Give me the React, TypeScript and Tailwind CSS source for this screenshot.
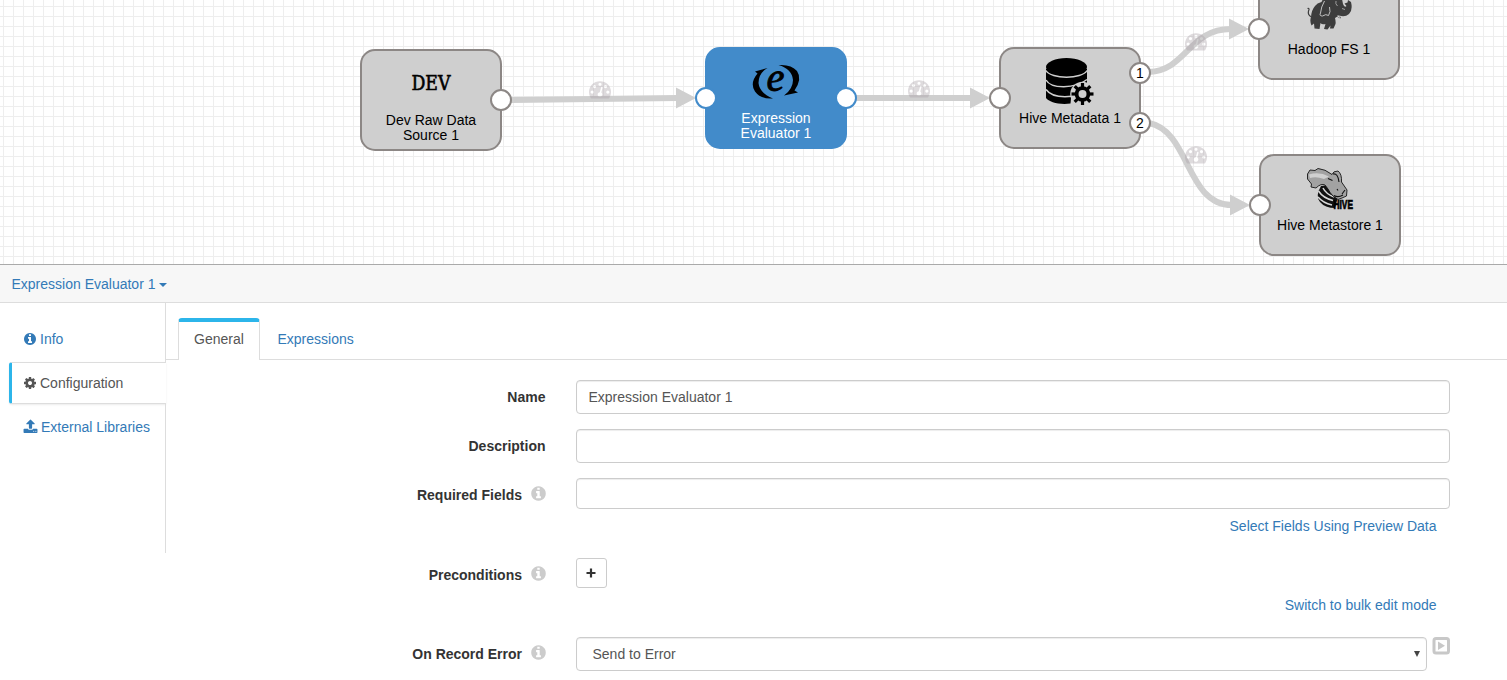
import type { ReactNode } from "react";

const INFO =
  "M1152 1376v-160q0-14-9-23t-23-9h-96v-512q0-14-9-23t-23-9h-320q-14 0-23 9t-9 23v160q0 14 9 23t23 9h96v320h-96q-14 0-23 9t-9 23v160q0 14 9 23t23 9h448q14 0 23-9t9-23zm-128-896v-160q0-14-9-23t-23-9h-192q-14 0-23 9t-9 23v160q0 14 9 23t23 9h192q14 0 23-9t9-23zm640 416q0 209-103 385.5t-279.5 279.5-385.5 103-385.5-103-279.5-279.5-103-385.5 103-385.5 279.5-279.5 385.5-103 385.5 103 279.5 279.5 103 385.5z";
const COG =
  "M1152 896q0-106-75-181t-181-75-181 75-75 181 75 181 181 75 181-75 75-181zm512-109v222q0 12-8 23t-20 13l-185 28q-19 54-39 91 35 50 107 138 10 12 10 25t-9 23q-27 37-99 108t-94 71q-12 0-26-9l-138-108q-44 23-91 38-16 136-29 186-7 28-36 28h-222q-14 0-24.5-8.5t-11.5-21.5l-28-184q-49-16-90-37l-141 107q-10 9-25 9-14 0-25-11-126-114-165-168-7-10-7-23 0-12 8-23 15-21 51-66.5t54-70.5q-27-50-41-99l-183-27q-13-2-21-12.5t-8-23.5v-222q0-12 8-23t19-13l186-28q14-46 39-92-40-57-107-138-10-12-10-24 0-10 9-23 26-36 98.5-107.5t94.5-71.5q13 0 26 10l138 107q44-23 91-38 16-136 29-186 7-28 36-28h222q14 0 24.5 8.5t11.5 21.5l28 184q49 16 90 37l142-107q9-9 24-9 13 0 25 10 129 119 165 170 7 8 7 22 0 12-8 23-15 21-51 66.5t-54 70.5q26 50 41 98l183 28q13 2 21 12.5t8 23.5z";
const UPLOAD =
  "M1344 1472q0-26-19-45t-45-19-45 19-19 45 19 45 45 19 45-19 19-45zm256 0q0-26-19-45t-45-19-45 19-19 45 19 45 45 19 45-19 19-45zm128-224v320q0 40-28 68t-68 28h-1472q-40 0-68-28t-28-68v-320q0-40 28-68t68-28h427q21 56 70.5 92t110.5 36h256q61 0 110.5-36t70.5-92h427q40 0 68 28t28 68zm-325-648q-17 40-59 40h-256v448q0 26-19 45t-45 19h-256q-26 0-45-19t-19-45v-448h-256q-42 0-59-40-17-39 14-69l448-448q18-19 45-19t45 19l448 448q31 30 14 69z";
const GAUGE =
  "M384 1152q0-53-37.5-90.5t-90.5-37.5-90.5 37.5-37.5 90.5 37.5 90.5 90.5 37.5 90.5-37.5 37.5-90.5zm192-448q0-53-37.5-90.5t-90.5-37.5-90.5 37.5-37.5 90.5 37.5 90.5 90.5 37.5 90.5-37.5 37.5-90.5zm428 481l101-382q6-26-7.5-48.5t-38.5-29.5-48 6.5-30 39.5l-101 382q-60 5-107 43.5t-63 98.5q-20 77 20 146t117 89 146-20 89-117q16-60-6-117t-72-91zm660-33q0-53-37.5-90.5t-90.5-37.5-90.5 37.5-37.5 90.5 37.5 90.5 90.5 37.5 90.5-37.5 37.5-90.5zm-640-640q0-53-37.5-90.5t-90.5-37.5-90.5 37.5-37.5 90.5 37.5 90.5 90.5 37.5 90.5-37.5 37.5-90.5zm448 192q0-53-37.5-90.5t-90.5-37.5-90.5 37.5-37.5 90.5 37.5 90.5 90.5 37.5 90.5-37.5 37.5-90.5zm320 448q0 261-141 483-19 29-54 29h-1402q-35 0-54-29-141-221-141-483 0-182 71-348t191-286 286-191 348-71 348 71 286 191 191 286 71 348z";

function Glyph({ d, className }: { d: string; className: string }) {
  return (
    <svg viewBox="0 0 1792 1792" fill="currentColor" className={className}>
      <path d={d} />
    </svg>
  );
}

function Port({ className, label }: { className: string; label?: string }) {
  return (
    <div
      className={`absolute flex h-[22px] w-[22px] items-center justify-center rounded-full border-2 bg-white text-[14px] leading-none text-black ${className}`}
    >
      {label}
    </div>
  );
}

function Node({ className, children }: { className: string; children: ReactNode }) {
  return (
    <div
      className={`absolute h-[102px] w-[142px] rounded-[15px] border-2 text-center text-[14px] leading-[15px] ${className}`}
    >
      {children}
    </div>
  );
}

function DevIcon() {
  return (
    <svg width="50" height="24" viewBox="0 0 50 24" className="mx-auto overflow-visible">
      <text x="5.500" y="19" fontFamily="DejaVu Serif, serif" fontSize="19.500" stroke="#000" strokeWidth="0.600" textLength="39" lengthAdjust="spacingAndGlyphs">
        DEV
      </text>
    </svg>
  );
}

function EvaluatorIcon() {
  return (
    <svg width="50" height="36" viewBox="0 0 50 36" className="mx-auto mt-[15px] overflow-visible">
      <path d="M4 7.500 L16.500 4 Q7.500 9 7.500 19 Q8.500 29 22 34.500 Q10 35.500 4 27.500 Q-1.500 19 6.500 9.500 Z" />
      <path d="M27.500 1 Q40 0 46 7 Q51.500 15 43.500 26.500 L47 28.600 L33 31.500 Q42 25 42 16 Q41 5 27.500 1 Z" />
      <text x="15.500" y="27.200" fontFamily="Liberation Serif, serif" fontStyle="italic" fontSize="43" stroke="#000" strokeWidth="0.900" textLength="18" lengthAdjust="spacingAndGlyphs">
        e
      </text>
    </svg>
  );
}

function DatabaseIcon() {
  return (
    <svg width="50" height="50" viewBox="0 0 50 50" className="mx-auto mt-[8px]">
      <path d="M1 12 V41 C4 45 14 48 25.500 46.500 L27 32 L42 26 V12 Z" />
      <ellipse cx="21.500" cy="10" rx="20.500" ry="9" />
      <path d="M1 13.500 C6 22.500 37 22.500 42 13.500 M1 23 C6 32 30 32 42 22.500 M1 32.500 C6 39.500 16 40.500 27 39.300" fill="none" stroke="#cfcfcf" strokeWidth="1.500" />
      <g transform="translate(37.500 37)">
        <circle r="12.300" fill="#cfcfcf" />
        {[0, 45, 90, 135].map((a) => (
          <rect key={a} x="-1.600" y="-11" width="3.200" height="22" transform={`rotate(${a})`} />
        ))}
        <circle r="7.800" />
        <circle r="4" fill="#cfcfcf" />
      </g>
    </svg>
  );
}

function ElephantIcon() {
  return (
    <svg width="48" height="34" viewBox="0 0 48 34" className="mx-auto">
      <path
        d="M10 6 Q12 3 16.500 2 L18 -1 H37 L38 4 Q39.500 8 41.500 6 L39.500 3.500 L42.500 2.500 L43 0 L46 2 Q48 10 44 14 Q40 17.500 34 15.500 L30 18 Q31 22 30.500 24 L28.500 28.500 L25 28.500 L25.500 25.500 L22.500 29.500 L19 29 L20.500 24 Q17 25 15.500 23 L14.500 29 L9.500 28.500 L9 23.500 L6.500 25.500 Q4.500 21 6 17 Q6.500 10 10 6 Z"
        fill="#3d3d3d"
      />
      <path d="M6.500 17 Q2.500 15 3.500 11 Q5 8 2.500 8.500" fill="none" stroke="#3d3d3d" strokeWidth="1.200" />
      <path d="M19.500 1 Q16 7 15.500 13 Q14 16 17.500 16 Q21 13.500 23.500 15.500 Q26 12 24.500 7" fill="none" stroke="#cfcfcf" strokeWidth="0.900" />
      <path d="M31 1 Q30 4 32.500 6 M37 8.500 L40 9.500" fill="none" stroke="#a8a8a8" strokeWidth="0.900" />
      <path d="M32 15 Q32.500 18.500 36 18 Q34.500 17 34.500 15.500 Z" fill="#e6e6e6" stroke="#3d3d3d" strokeWidth="0.500" />
    </svg>
  );
}

function HiveIcon() {
  return (
    <svg width="50" height="48" viewBox="0 0 50 48" className="mx-auto overflow-visible">
      <path d="M16 21 Q10 31 15 37 Q20 43 30 43 L33 32 L24 20 Z" fill="#111" />
      <path d="M13.500 26 Q18 33 28 35.500 M13 32 Q18 38 27 40 M18 23 Q21 29 29 32" fill="none" stroke="#d8d8d8" strokeWidth="1.500" />
      <path
        d="M2.500 9 L5 5 L10 5.500 L13 3.500 Q20 4 27 9.500 Q28 6 33 6 Q37 9 36.500 17 L42 25 L41.500 31 L37 33 L33 34.500 L28 31 Q25 28 23 24 L20 20 Q16 18 11 23 L6 22 L6.500 19 L2.500 14 Z"
        fill="#a2a2a2"
        stroke="#151515"
        strokeWidth="0.900"
      />
      <path d="M4 9.500 Q14 6 24 11.500 L19 14 Q11 11 5 13 Z" fill="#d0d0d0" />
      <path d="M23 13.500 L27.500 15.500 M28 9 Q33 8 34 17 M32 24 L33 25.500 M37 29 L40 25 M29 30.500 Q33 33 38 30" fill="none" stroke="#111" strokeWidth="1.100" />
      <text x="28.500" y="44.300" fontFamily="Liberation Sans, sans-serif" fontWeight="bold" fontSize="12" stroke="#000" strokeWidth="0.700" textLength="19.500" lengthAdjust="spacingAndGlyphs">
        HIVE
      </text>
    </svg>
  );
}

function Links() {
  return (
    <svg width="1507" height="264" className="absolute left-0 top-0">
      <g fill="none" stroke="#cfcfcf" strokeWidth="6">
        <path d="M511 100 L678 98" />
        <path d="M856 98 H972" />
        <path d="M1149 72 C1187 70 1189 29 1231 29" />
        <path d="M1149 123 C1190 131 1186 205 1232 205" />
      </g>
      <g fill="#cfcfcf">
        <path d="M676 87.500 L696 98 L676 108.500 Z" />
        <path d="M970 87.500 L990 98 L970 108.500 Z" />
        <path d="M1229 18.500 L1249 29 L1229 39.500 Z" />
        <path d="M1230 194.500 L1250 205 L1230 215.500 Z" />
      </g>
    </svg>
  );
}

const grayNode = "border-[#8c8785] bg-[#cfcfcf] text-black";
const grayPort = "border-[#8c8785]";
const gauge = "absolute h-[22px] w-[22px] text-[#a89ea6] opacity-[0.37]";

function Canvas() {
  return (
    <div className="relative h-[264px] overflow-hidden bg-white bg-[linear-gradient(to_right,#eeeeee_1px,transparent_1px),linear-gradient(to_bottom,#eeeeee_1px,transparent_1px)] bg-[size:10px_10px] bg-[position:3px_6px]">
      <Links />
      <Glyph d={GAUGE} className={`${gauge} left-[589px] top-[78px]`} />
      <Glyph d={GAUGE} className={`${gauge} left-[908px] top-[77px]`} />
      <Glyph d={GAUGE} className={`${gauge} left-[1185px] top-[30px]`} />
      <Glyph d={GAUGE} className={`${gauge} left-[1185px] top-[143px]`} />

      <Node className={`left-[360px] top-[49px] ${grayNode}`}>
        <div className="mt-[20px]"><DevIcon /></div>
        <div className="mt-[18px]">Dev Raw Data<br />Source 1</div>
      </Node>
      <Port className={`left-[490px] top-[89px] ${grayPort}`} />

      <Node className="left-[705px] top-[47px] border-[#428bca] bg-[#428bca] text-white">
        <div className="text-black"><EvaluatorIcon /></div>
        <div className="mt-[11px]">Expression<br />Evaluator 1</div>
      </Node>
      <Port className="left-[695px] top-[87px] border-[#428bca]" />
      <Port className="left-[835px] top-[87px] border-[#428bca]" />

      <Node className={`left-[999px] top-[47px] ${grayNode}`}>
        <DatabaseIcon />
        <div className="mt-[4px]">Hive Metadata 1</div>
      </Node>
      <Port className={`left-[989px] top-[87px] ${grayPort}`} />
      <Port className={`left-[1129px] top-[62px] ${grayPort}`} label="1" />
      <Port className={`left-[1129px] top-[112px] ${grayPort}`} label="2" />

      <Node className={`left-[1258px] top-[-22px] ${grayNode}`}>
        <div className="pt-[20px]"><ElephantIcon /></div>
        <div className="mt-[8px]">Hadoop FS 1</div>
      </Node>
      <Port className={`left-[1248px] top-[18px] ${grayPort}`} />

      <Node className={`left-[1259px] top-[154px] ${grayNode}`}>
        <div className="pt-[9px]"><HiveIcon /></div>
        <div className="mt-[5px]">Hive Metastore 1</div>
      </Node>
      <Port className={`left-[1249px] top-[194px] ${grayPort}`} />
    </div>
  );
}

function Sidebar() {
  return (
    <div className="flex h-[250px] w-[166px] shrink-0 flex-col pl-[9px]">
      <div className="flex h-[59px] items-center gap-[3px] border-r border-[#ddd] pl-[14px] pt-[12px] text-[#337ab7]">
        <Glyph d={INFO} className="h-[14px] w-[14px]" />
        Info
      </div>
      <div className="flex h-[42px] items-center gap-[3px] rounded-l-[3px] border-y border-l-[3px] border-[#ddd] border-l-[#2cb5ea] pl-[11px] text-[#555] shadow-[0_1px_2px_rgba(0,0,0,0.08)]">
        <Glyph d={COG} className="h-[14px] w-[14px]" />
        Configuration
      </div>
      <div className="flex grow items-start gap-[3px] border-r border-[#ddd] pl-[14px] pt-[13px] text-[#337ab7]">
        <Glyph d={UPLOAD} className="mt-[2px] h-[15px] w-[15px]" />
        External Libraries
      </div>
    </div>
  );
}

function Field({ label, info, className, children }: { label: string; info?: boolean; className: string; children: ReactNode }) {
  return (
    <div className={`flex ${className}`}>
      <div className="flex h-[34px] w-[380px] shrink-0 items-center justify-end pr-[0.5px] font-bold text-[#333]">
        {label}
        {info && <Glyph d={INFO} className="-mr-[1.5px] mb-[3px] ml-[8px] h-[17px] w-[17px] text-[#ccc]" />}
      </div>
      <div className="ml-[30px] w-[874px]">{children}</div>
    </div>
  );
}

const box = "rounded-[4px] border border-[#ccc] bg-white shadow-[inset_0_1px_1px_rgba(0,0,0,0.075)]";

export default function App() {
  return (
    <div className="h-[680px] w-[1507px] overflow-hidden bg-white font-['Liberation_Sans',Arial,sans-serif] text-[14px] leading-[20px]">
      <Canvas />
      <div className="flex h-[39px] items-center border-b border-t border-b-[#ddd] border-t-[#aaa] bg-[#f7f7f7] pl-[11.5px] text-[#337ab7]">
        Expression Evaluator 1
        <span className="ml-[3.5px] mt-[2px] border-x-4 border-t-4 border-x-transparent border-t-[#337ab7]" />
      </div>
      <div className="flex">
        <Sidebar />
        <div className="grow">
          <div className="mt-[15px] flex h-[42px]">
            <div className="w-[12px] border-b border-[#ddd]" />
            <div className="flex w-[82px] justify-center rounded-t-[4px] border-x border-t-[4px] border-[#ddd] border-t-[#2cb5ea] pt-[7px] text-[#555]">General</div>
            <div className="grow border-b border-[#ddd] pl-[17.5px] pt-[11px] text-[#337ab7]">Expressions</div>
          </div>
          <Field label="Name" className="mt-[20px] h-[49px]">
            <div className={`flex h-[34px] items-center px-[11.5px] text-[#555] ${box}`}>Expression Evaluator 1</div>
          </Field>
          <Field label="Description" className="h-[49px]">
            <div className={`h-[34px] ${box}`} />
          </Field>
          <Field label="Required Fields" info className="h-[80px]">
            <div className={`h-[31px] ${box}`} />
            <div className="mt-[7px] pr-[13.5px] text-right text-[#337ab7]">Select Fields Using Preview Data</div>
          </Field>
          <Field label="Preconditions" info className="h-[79px]">
            <div className="flex h-[30px] w-[31px] items-center justify-center rounded-[3px] border border-[#ccc]">
              <svg width="10" height="10" viewBox="0 0 10 10" className="mb-[1px] mr-[1px]">
                <path d="M5 0.500 V9.500 M0.500 5 H9.500" stroke="#333" strokeWidth="2.200" />
              </svg>
            </div>
            <div className="mt-[7px] pr-[13.5px] text-right text-[#337ab7]">Switch to bulk edit mode</div>
          </Field>
          <Field label="On Record Error" info className="h-[43px]">
            <div className="flex">
              <div className={`flex h-[34px] w-[851px] items-center justify-between pl-[15.5px] pr-[6px] text-[#555] ${box}`}>
                Send to Error
                <svg width="6" height="6" viewBox="0 0 6 6">
                  <path d="M0 0 H6 L3 6 Z" fill="#444" />
                </svg>
              </div>
              <svg width="18" height="18" viewBox="0 0 18 18" className="ml-[5px]">
                <rect x="2" y="1.500" width="14.500" height="14.500" rx="2" fill="none" stroke="#c8c8c8" strokeWidth="3" />
                <path d="M6 4.500 L13 8.700 L6 13 Z" fill="#c8c8c8" />
              </svg>
            </div>
          </Field>
        </div>
      </div>
    </div>
  );
}
